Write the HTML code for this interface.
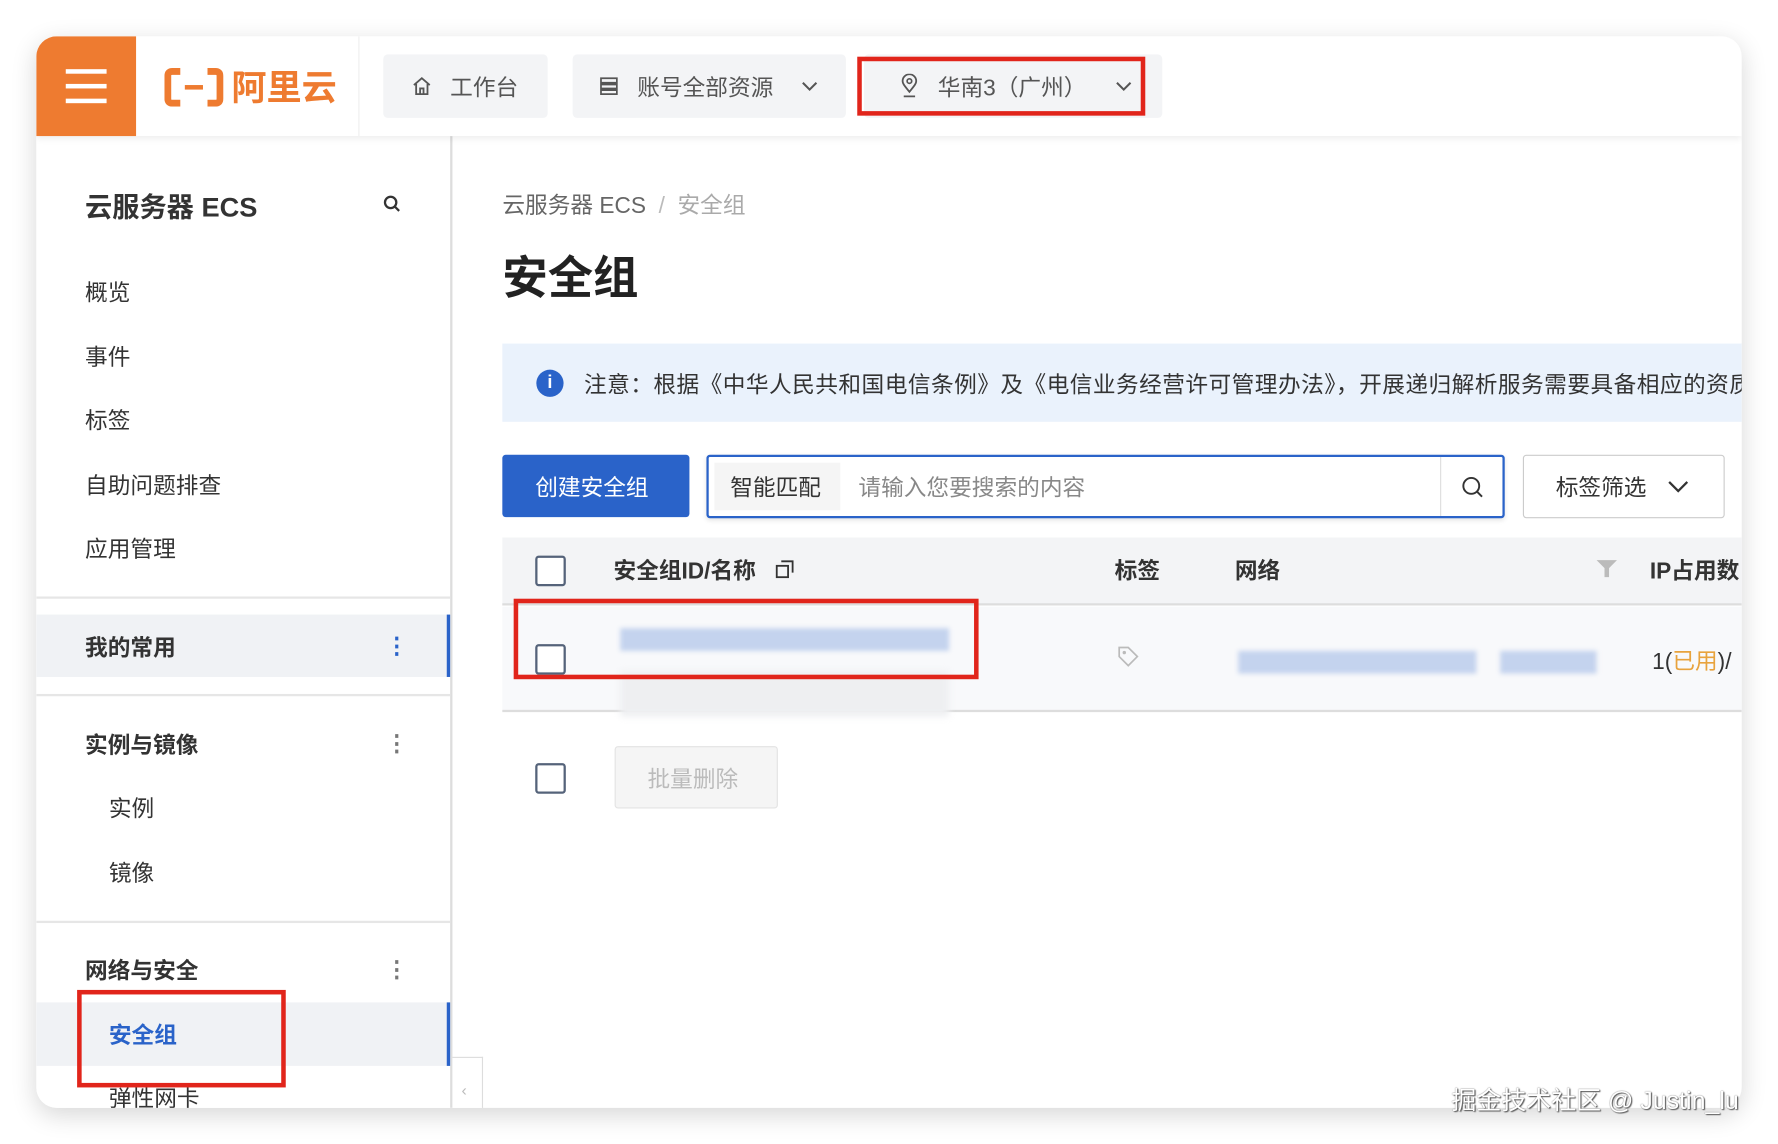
<!DOCTYPE html>
<html><head><meta charset="utf-8"><style>
*{box-sizing:border-box;margin:0;padding:0}
body{width:1778px;height:1144px;background:#fff;overflow:hidden;font-family:"Liberation Sans","Noto Sans CJK SC",sans-serif;color:#333}
#s{position:absolute;left:0;top:0;width:1568px;height:1009px;transform:scale(1.13393);transform-origin:0 0}
.a{position:absolute}
.win{left:32px;top:32px;width:1504px;height:945px;background:#fff;border-radius:18px;box-shadow:0 6px 22px rgba(0,0,0,.16);overflow:hidden}
.t{position:absolute;white-space:nowrap;line-height:1;margin-top:2px}
.btn{position:absolute;background:#f3f4f6;border-radius:4px}
.red{position:absolute;border:4px solid #e1251b}
.cb{position:absolute;width:27px;height:27px;border:2px solid #55637a;border-radius:3px;background:#fff}
.blur{position:absolute;background:#c4d3ee;filter:blur(2px)}
svg.i{position:absolute}
</style></head><body><div id="s">
<div class="a win">
 <div class="a" style="left:0;top:0;width:1504px;height:88px;background:#fff;box-shadow:0 2px 6px rgba(0,0,0,.08);z-index:2"></div>
 <div class="a" style="left:0;top:0;width:88px;height:88px;background:#ee7b30;z-index:3">
  <div class="a" style="left:26px;top:29px;width:36px;height:4px;background:#fff"></div>
  <div class="a" style="left:26px;top:42px;width:36px;height:4px;background:#fff"></div>
  <div class="a" style="left:26px;top:55px;width:36px;height:4px;background:#fff"></div>
 </div>
 <div style="position:absolute;z-index:3;left:113px;top:28px">
  <svg width="52" height="34" viewBox="0 0 52 34"><path d="M14 3H7Q3 3 3 7V27Q3 31 7 31H14M38 3H45Q49 3 49 7V27Q49 31 45 31H38" fill="none" stroke="#ee7b30" stroke-width="6"/><rect x="18" y="15" width="16" height="4" fill="#ee7b30"/></svg>
 </div>
 <div class="t" style="z-index:3;left:172px;top:28px;font-size:31px;font-weight:bold;color:#ee7b30">阿里云</div>
 <div class="a" style="z-index:3;left:284px;top:0;width:1px;height:88px;background:#eee"></div>
 <div class="btn" style="z-index:3;left:306px;top:16px;width:145px;height:56px"></div>
 <svg class="i" style="z-index:4;left:330px;top:34px" width="20" height="20" viewBox="0 0 20 20"><path d="M3 9L10 3L17 9M5 8V17H15V8M8.5 17V12H11.5V17" fill="none" stroke="#555" stroke-width="1.6"/></svg>
 <div class="t" style="z-index:4;left:365px;top:34px;font-size:20px;color:#555">工作台</div>
 <div class="btn" style="z-index:3;left:473px;top:16px;width:241px;height:56px"></div>
 <svg class="i" style="z-index:4;left:495px;top:34px" width="20" height="20" viewBox="0 0 20 20"><path d="M3 3H17V7H3ZM3 8.5H17V12H3ZM3 13.5H17V17H3Z" fill="none" stroke="#555" stroke-width="1.5"/></svg>
 <div class="t" style="z-index:4;left:530px;top:34px;font-size:20px;color:#555">账号全部资源</div>
 <svg class="i" style="z-index:4;left:674px;top:37px" width="16" height="14" viewBox="0 0 16 14"><path d="M2 4L8 10L14 4" fill="none" stroke="#555" stroke-width="1.8"/></svg>
 <div class="btn" style="z-index:3;left:730px;top:16px;width:263px;height:56px"></div>
 <svg class="i" style="z-index:4;left:760px;top:33px" width="20" height="22" viewBox="0 0 20 22"><path d="M10 16C6 11 4 9 4 6.5A6 6 0 0 1 16 6.5C16 9 14 11 10 16Z" fill="none" stroke="#555" stroke-width="1.6"/><circle cx="10" cy="6.5" r="2" fill="none" stroke="#555" stroke-width="1.5"/><path d="M5 20H15" stroke="#555" stroke-width="1.6"/></svg>
 <div class="t" style="z-index:4;left:795px;top:34px;font-size:20px;color:#555">华南3（广州）</div>
 <svg class="i" style="z-index:4;left:951px;top:37px" width="16" height="14" viewBox="0 0 16 14"><path d="M2 4L8 10L14 4" fill="none" stroke="#555" stroke-width="1.8"/></svg>
 <div class="red" style="z-index:5;left:724px;top:18px;width:254px;height:52px"></div>

 <div class="a" style="left:0;top:88px;width:367px;height:857px;background:#fff;border-right:2px solid #ddd"></div>
 <div class="t" style="left:43px;top:138px;font-size:24px;font-weight:bold;color:#333">云服务器 ECS</div>
 <svg class="i" style="left:305px;top:139px" width="18" height="18" viewBox="0 0 18 18"><circle cx="7.5" cy="7.5" r="5" fill="none" stroke="#333" stroke-width="2"/><path d="M11 11L15 15" stroke="#333" stroke-width="2"/></svg>
 <div class="t" style="left:43px;top:215px;font-size:20px">概览</div>
 <div class="t" style="left:43px;top:272px;font-size:20px">事件</div>
 <div class="t" style="left:43px;top:328px;font-size:20px">标签</div>
 <div class="t" style="left:43px;top:385px;font-size:20px">自助问题排查</div>
 <div class="t" style="left:43px;top:441px;font-size:20px">应用管理</div>
 <div class="a" style="left:0;top:494px;width:365px;height:2px;background:#e6e6e6"></div>
 <div class="a" style="left:0;top:510px;width:365px;height:55px;background:#f0f2f5;border-right:3px solid #2a63c9"></div>
 <div class="t" style="left:43px;top:528px;font-size:20px;font-weight:bold">我的常用</div>
 <div class="t" style="left:308px;top:526px;font-size:20px;color:#2a63c9;font-weight:bold">⋮</div>
 <div class="a" style="left:0;top:580px;width:365px;height:2px;background:#e6e6e6"></div>
 <div class="t" style="left:43px;top:614px;font-size:20px;font-weight:bold">实例与镜像</div>
 <div class="t" style="left:308px;top:612px;font-size:20px;color:#777;font-weight:bold">⋮</div>
 <div class="t" style="left:64px;top:670px;font-size:20px">实例</div>
 <div class="t" style="left:64px;top:727px;font-size:20px">镜像</div>
 <div class="a" style="left:0;top:780px;width:365px;height:2px;background:#e6e6e6"></div>
 <div class="t" style="left:43px;top:813px;font-size:20px;font-weight:bold">网络与安全</div>
 <div class="t" style="left:308px;top:811px;font-size:20px;color:#777;font-weight:bold">⋮</div>
 <div class="a" style="left:0;top:852px;width:365px;height:56px;background:#f0f2f5;border-right:3px solid #2a63c9"></div>
 <div class="t" style="left:64px;top:870px;font-size:20px;font-weight:bold;color:#2a63c9">安全组</div>
 <div class="t" style="left:64px;top:926px;font-size:20px">弹性网卡</div>
 <div class="red" style="left:36px;top:841px;width:184px;height:86px"></div>
 <div class="a" style="left:367px;top:900px;width:27px;height:50px;border:1px solid #ddd;border-left:none;background:#fff"></div>
 <div class="t" style="left:375px;top:920px;font-size:14px;color:#bbb">‹</div>

 <div class="t" style="left:411px;top:138px;font-size:20px;color:#666">云服务器 ECS &nbsp;<span style="color:#bbb">/</span>&nbsp; <span style="color:#aaa">安全组</span></div>
 <div class="t" style="left:411px;top:192px;font-size:40px;font-weight:bold;color:#222">安全组</div>
 <div class="a" style="left:411px;top:271px;width:1093px;height:69px;background:#eaf2fc"></div>
 <div class="a" style="left:441px;top:294px;width:24px;height:24px;border-radius:50%;background:#2a63c9;color:#fff;font-size:16px;font-weight:bold;text-align:center;line-height:24px">i</div>
 <div class="t" style="left:483px;top:296px;font-size:20px;color:#333;letter-spacing:0.4px">注意：根据《中华人民共和国电信条例》及《电信业务经营许可管理办法》，开展递归解析服务需要具备相应的资质</div>
 <div class="a" style="left:411px;top:369px;width:165px;height:55px;background:#2a63c9;border-radius:3px"></div>
 <div class="t" style="left:440px;top:387px;font-size:20px;color:#fff">创建安全组</div>
 <div class="a" style="left:591px;top:369px;width:704px;height:56px;border:2px solid #2a63c9;border-radius:3px;background:#fff;box-shadow:0 2px 4px rgba(0,0,0,.1)"></div>
 <div class="a" style="left:598px;top:376px;width:111px;height:42px;background:#f5f5f5"></div>
 <div class="t" style="left:612px;top:387px;font-size:20px;color:#333">智能匹配</div>
 <div class="t" style="left:725px;top:387px;font-size:20px;color:#888">请输入您要搜索的内容</div>
 <div class="a" style="left:1238px;top:371px;width:1px;height:52px;background:#ddd"></div>
 <svg class="i" style="left:1256px;top:387px" width="22" height="22" viewBox="0 0 22 22"><circle cx="9.5" cy="9.5" r="7" fill="none" stroke="#333" stroke-width="1.7"/><path d="M14.5 14.5L19 19" stroke="#333" stroke-width="1.7"/></svg>
 <div class="a" style="left:1311px;top:369px;width:178px;height:56px;border:1px solid #ccc;border-radius:3px"></div>
 <div class="t" style="left:1340px;top:387px;font-size:20px;color:#333">标签筛选</div>
 <svg class="i" style="left:1437px;top:389px" width="22" height="16" viewBox="0 0 22 16"><path d="M3 4L11 12L19 4" fill="none" stroke="#333" stroke-width="2"/></svg>

 <div class="a" style="left:411px;top:442px;width:1093px;height:60px;background:#f3f4f6;border-bottom:2px solid #ddd"></div>
 <div class="cb" style="left:440px;top:458px"></div>
 <div class="t" style="left:509px;top:460px;font-size:20px;font-weight:bold">安全组ID/名称</div>
 <svg class="i" style="left:650px;top:460px" width="20" height="20" viewBox="0 0 20 20"><rect x="3" y="7" width="10" height="10" fill="none" stroke="#333" stroke-width="1.6"/><path d="M7 3H17V13" fill="none" stroke="#333" stroke-width="1.6"/></svg>
 <div class="t" style="left:951px;top:460px;font-size:20px;font-weight:bold">标签</div>
 <div class="t" style="left:1057px;top:460px;font-size:20px;font-weight:bold">网络</div>
 <svg class="i" style="left:1375px;top:461px" width="20" height="18" viewBox="0 0 20 18"><path d="M1 1H19L12 8V16H8V8Z" fill="#bbb"/></svg>
 <div class="t" style="left:1423px;top:460px;font-size:20px;font-weight:bold">IP占用数</div>
 <div class="a" style="left:411px;top:503px;width:1093px;height:93px;background:#f8f9fb;border-bottom:2px solid #ddd"></div>
 <div class="cb" style="left:440px;top:536px"></div>
 <div class="blur" style="left:515px;top:522px;width:290px;height:20px"></div>
 <div class="a" style="left:515px;top:560px;width:290px;height:40px;background:#eeeff1;filter:blur(3px)"></div>
 <svg class="i" style="left:952px;top:536px" width="22" height="22" viewBox="0 0 22 22"><path d="M3 3H11L19 11L11 19L3 11Z" fill="none" stroke="#bbb" stroke-width="1.5"/><circle cx="7.5" cy="7.5" r="1.5" fill="#bbb"/></svg>
 <div class="blur" style="left:1060px;top:542px;width:210px;height:20px"></div>
 <div class="blur" style="left:1291px;top:542px;width:85px;height:20px"></div>
 <div class="t" style="left:1425px;top:540px;font-size:20px;color:#333">1(<span style="color:#e8a33d">已用</span>)/</div>
 <div class="red" style="left:421px;top:496px;width:410px;height:71px"></div>
 <div class="cb" style="left:440px;top:641px"></div>
 <div class="a" style="left:510px;top:626px;width:144px;height:55px;background:#f5f5f5;border:1px solid #e3e3e3;border-radius:3px"></div>
 <div class="t" style="left:539px;top:644px;font-size:20px;color:#bbb">批量删除</div>
</div>
<div class="t" style="left:1280px;top:958px;font-size:22px;color:#fff;text-shadow:0 0 1px #555,1px 1px 1px #555">掘金技术社区 @ Justin_lu</div>
</div></body></html>
